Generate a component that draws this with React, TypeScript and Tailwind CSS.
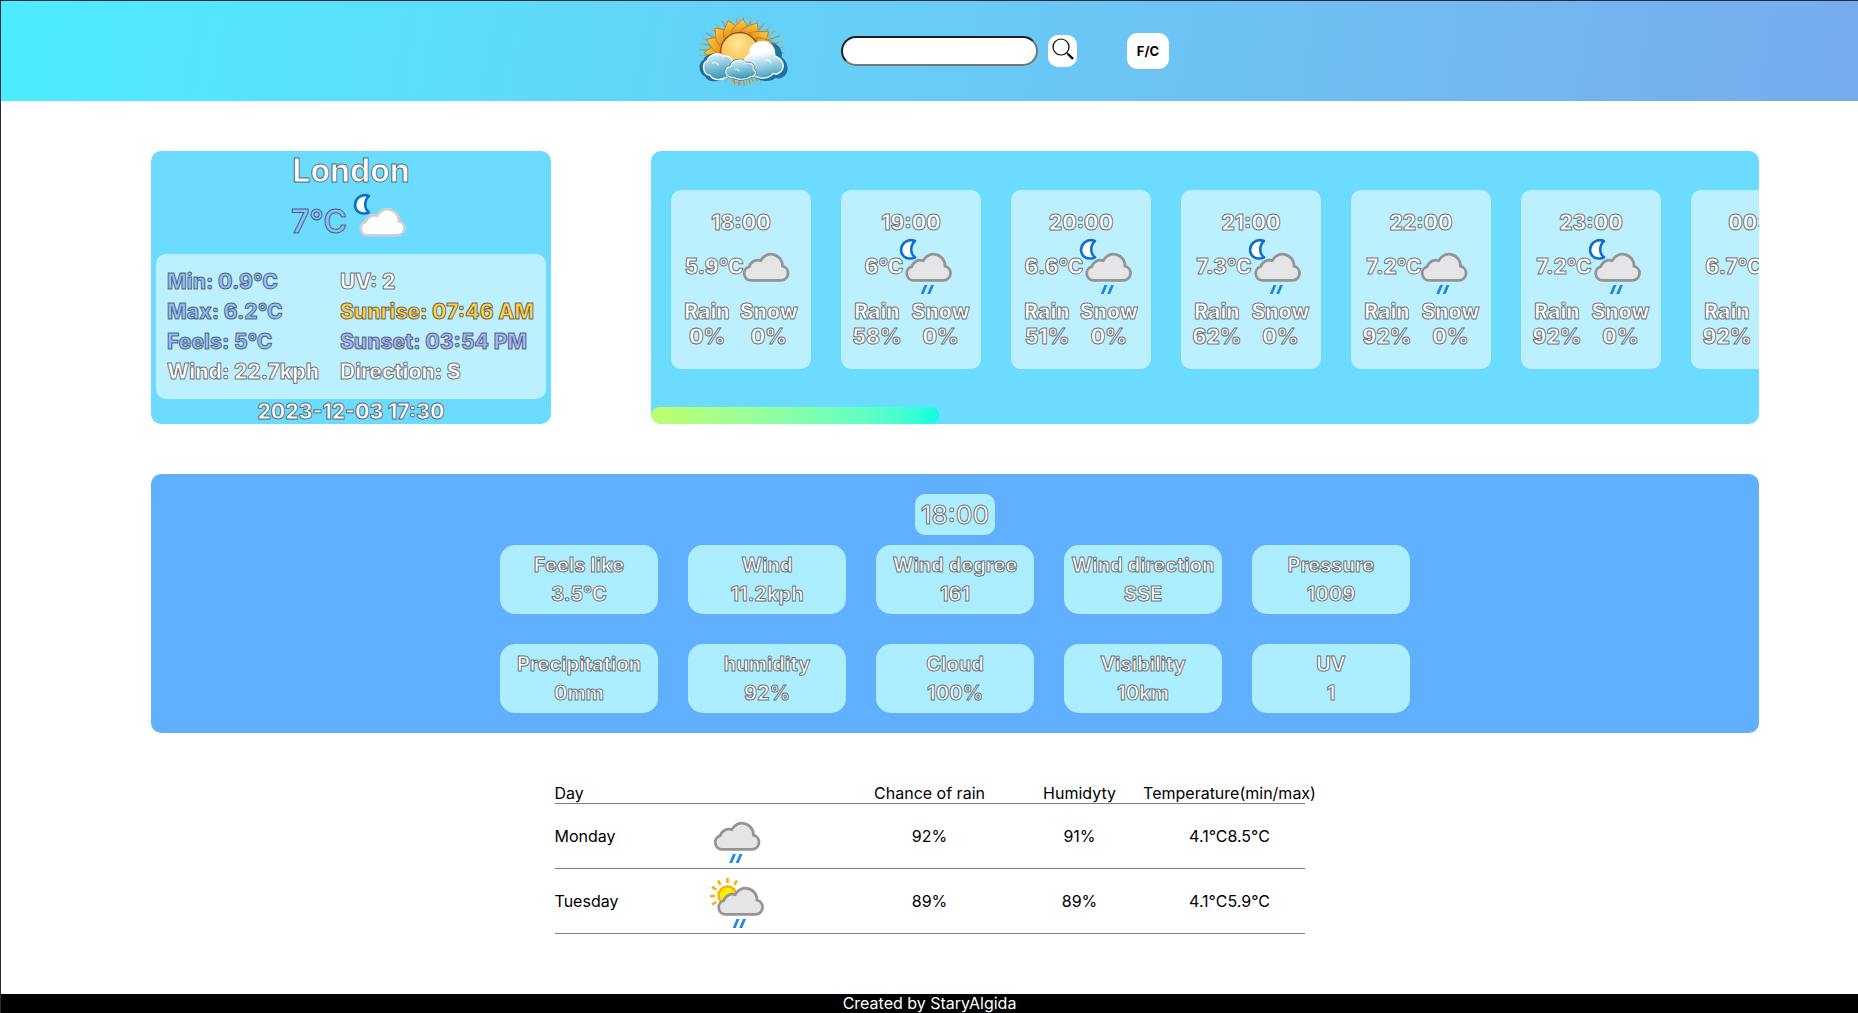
import React from "react";

type Kind = "night" | "cloud" | "nightRain" | "rain" | "dayRain";

const CLOUD =
  "M20.5 45.4H50.500A7.200 7.200 0 0 0 52 31.200A11.500 11.500 0 0 0 30.200 25.600A9 9 0 0 0 18.700 31.700A7 7 0 0 0 20.500 45.400Z";

function WeatherIcon({ kind, className = "" }: { kind: Kind; className?: string }) {
  const shift = kind === "cloud" || kind === "rain" ? "translate(-3.5 0)" : undefined;
  const white = kind === "night";
  return (
    <svg viewBox="0 0 64 64" className={"h-16 w-16 shrink-0 " + className} aria-hidden="true">
      {(kind === "night" || kind === "nightRain") && (
        <path
          d="M22 6C19 4.800 14.500 5 11.500 7.500C7 11.500 7 18 11 21.500C14 24 19 24.200 22 22.300C17 18.500 17 10.500 22 6z"
          fill="#fff"
          stroke="#0a6fd4"
          strokeWidth="2.600"
          strokeLinejoin="round"
        />
      )}
      {kind === "dayRain" && (
        <g>
          <circle cx="22.500" cy="26.500" r="9" fill="#fff000" stroke="#ffb000" strokeWidth="2.400" />
          <path
            d="M22.500 9v5M13 11.500l2.500 4.200M32 11.500l-2.500 4.200M7 17.800l4.200 2.700M5 27h5M7 35.500l4.200-2.500"
            stroke="#ffae00"
            strokeWidth="2.600"
          />
        </g>
      )}
      <g transform={shift}>
        <path d={CLOUD} fill={white ? "#fff" : "#e5e5e7"} stroke={white ? "#cfcfcf" : "#949494"} strokeWidth="2.800" />
        {kind !== "night" && kind !== "cloud" && (
          <path d="M31.500 50h3l-3.800 9h-3zM38 50h3l-3.800 9h-3z" fill="#1e88e5" />
        )}
      </g>
    </svg>
  );
}

function Logo() {
  const rays = Array.from({ length: 72 }, (_, i) => i * 5);
  const petals = [-98, -74, -49, -24, 0, 24, 49, 72];
  return (
    <svg viewBox="0 3 294 240" className="h-20 w-[98px]" role="img" aria-label="Weather">
      <defs>
        <radialGradient id="sun" cx="45%" cy="30%" r="75%">
          <stop offset="0" stopColor="#ffe796" />
          <stop offset="0.600" stopColor="#fbc65a" />
          <stop offset="1" stopColor="#ef9a2c" />
        </radialGradient>
        <linearGradient id="petal" x1="0" y1="0" x2="0" y2="1">
          <stop offset="0" stopColor="#fccf3c" />
          <stop offset="1" stopColor="#e8901f" />
        </linearGradient>
        <linearGradient id="puffBig" x1="0.400" y1="0" x2="0.600" y2="1">
          <stop offset="0.300" stopColor="#ffffff" />
          <stop offset="0.600" stopColor="#a9d8e8" />
          <stop offset="1" stopColor="#3f9dc0" />
        </linearGradient>
        <linearGradient id="puff" x1="0" y1="0" x2="0.200" y2="1">
          <stop offset="0" stopColor="#eef9fb" />
          <stop offset="0.450" stopColor="#93cde0" />
          <stop offset="1" stopColor="#3d97bb" />
        </linearGradient>
      </defs>
      <g transform="translate(155 124) scale(1.080 0.860) translate(-155 -124)">
        {rays.map((a, i) => (
          <path
            key={a}
            d={i % 2 ? "M155 50L152 16" : "M155 50L161 5"}
            stroke={i % 3 === 0 ? "#8f8a6c" : i % 3 === 1 ? "#c99a4a" : "#e0a23c"}
            strokeWidth="2.500"
            transform={`rotate(${a} 155 124)`}
          />
        ))}
      </g>
      <g transform="translate(150 122) scale(1.030 0.910) translate(-150 -122)">
        {petals.map((a) => (
          <path
            key={a}
            d="M124 66C127 46 142 36 158 18C169 36 181 50 176 68z"
            fill="url(#petal)"
            stroke="#b06a1c"
            strokeWidth="2"
            transform={`rotate(${a} 150 122)`}
          />
        ))}
      </g>
      <circle cx="149" cy="125" r="57" fill="url(#sun)" stroke="#8a4a1a" strokeWidth="3.500" />
      <path d="M132 205l2 18M146 208l-1 20M160 208l3 20M176 206l4 16M196 204l6 10" stroke="#e0852a" strokeWidth="4" />
      <path
        d="M232 98C262 96 280 118 275 142C292 154 298 176 288 192C278 208 262 206 256 204C244 216 218 216 196 204z"
        fill="#1f6f9f"
      />
      <path
        d="M100 206C78 220 52 214 46 200C26 194 22 158 40 150C44 138 60 130 76 130L110 206z"
        fill="#1f6f9f"
      />
      <path
        d="M172 192C158 172 158 142 180 132C176 106 204 90 226 96C246 100 256 116 254 138C274 144 284 162 278 176C272 192 256 194 250 190C236 208 206 208 192 196z"
        fill="url(#puffBig)"
        stroke="#fff"
        strokeWidth="4"
      />
      <path
        d="M112 200C92 214 66 210 60 196C38 194 34 160 52 152C56 134 84 124 98 138C116 136 128 144 126 158z"
        fill="url(#puff)"
        stroke="#fff"
        strokeWidth="4"
      />
      <path
        d="M118 200C102 196 104 170 122 170C124 150 156 142 166 160C182 156 194 164 190 178C202 186 196 202 182 200C170 210 140 210 130 202C126 204 122 202 118 200z"
        fill="url(#puff)"
        stroke="#1f6f9f"
        strokeWidth="7"
      />
      <path
        d="M118 200C102 196 104 170 122 170C124 150 156 142 166 160C182 156 194 164 190 178C202 186 196 202 182 200C170 210 140 210 130 202C126 204 122 202 118 200z"
        fill="url(#puff)"
        stroke="#fff"
        strokeWidth="3.500"
      />
      <path
        d="M66 160c8-4 16 0 20 6M200 134c10-4 18 2 20 8M226 150c8-2 14 2 16 8M134 178c8-2 12 2 14 6"
        fill="none"
        stroke="#fff"
        strokeOpacity=".7"
        strokeWidth="4"
      />
    </svg>
  );
}

const hours: { time: string; temp: string; kind: Kind; rain: string }[] = [
  { time: "18:00", temp: "5.9°C", kind: "cloud", rain: "0%" },
  { time: "19:00", temp: "6°C", kind: "nightRain", rain: "58%" },
  { time: "20:00", temp: "6.6°C", kind: "nightRain", rain: "51%" },
  { time: "21:00", temp: "7.3°C", kind: "nightRain", rain: "62%" },
  { time: "22:00", temp: "7.2°C", kind: "rain", rain: "92%" },
  { time: "23:00", temp: "7.2°C", kind: "nightRain", rain: "92%" },
  { time: "00:00", temp: "6.7°C", kind: "rain", rain: "92%" },
];

const details = [
  ["Feels like", "3.5°C"],
  ["Wind", "11.2kph"],
  ["Wind degree", "161"],
  ["Wind direction", "SSE"],
  ["Pressure", "1009"],
  ["Precipitation", "0mm"],
  ["humidity", "92%"],
  ["Cloud", "100%"],
  ["Visibility", "10km"],
  ["UV", "1"],
];

const days: { day: string; kind: Kind; rain: string; humidity: string; min: string; max: string }[] = [
  { day: "Monday", kind: "rain", rain: "92%", humidity: "91%", min: "4.1°C", max: "8.5°C" },
  { day: "Tuesday", kind: "dayRain", rain: "89%", humidity: "89%", min: "4.1°C", max: "5.9°C" },
];

export default function App() {
  return (
    <div className="flex min-h-screen flex-col border-t border-l border-[#2b2a3a] bg-white font-['Inter',sans-serif] text-base text-black">
      <header className="flex h-[100px] items-center justify-center bg-linear-100 from-[#4cecff] to-[#76abed]">
        <Logo />
        <input
          type="text"
          aria-label="City"
          className="ml-[53px] h-[30px] w-[197px] rounded-full border-2 border-t-[#1f1f1f] border-r-[#767676] border-b-[#767676] border-l-[#1f1f1f] bg-white px-3"
        />
        <button aria-label="Search" className="ml-2.5 flex h-8 w-[29px] items-start justify-center rounded-[10px] bg-white pt-0.5">
          <svg viewBox="0 0 24 24" className="h-6 w-6" fill="none" stroke="#000">
            <circle cx="10" cy="10" r="8" strokeWidth="1.200" />
            <path d="M15.800 15.800l2 2" strokeWidth="1.200" />
            <path d="M17 17l5 5" strokeWidth="2.400" />
          </svg>
        </button>
        <button className="ml-[50px] h-9 w-[42px] rounded-[10px] bg-white pt-0.5 text-[13px] font-bold">F/C</button>
      </header>

      <main className="flex flex-col">
        <div className="mt-[50px] mr-[99px] ml-[150px] flex gap-[100px]">
          <section className="w-[400px] shrink-0 rounded-[10px] bg-[#6bdbff] text-center text-[21px] font-extrabold text-white [-webkit-text-stroke:1px_rgba(50,35,35,0.66)]">
            <h2 className="text-[32px] leading-10 font-bold">London</h2>
            <div className="-mt-px flex h-16 items-center justify-center">
              <span className="text-[32px] font-semibold text-[#8abfff]">7°C</span>
              <WeatherIcon kind="night" />
            </div>
            <div className="mx-[5px] grid grid-cols-[auto_auto] justify-start gap-x-[21px] rounded-[10px] bg-[#bdf0ff] px-[11px] pt-[13px] pb-3 text-left leading-[30px] whitespace-nowrap">
              <span className="text-[#8abfff]">Min: 0.9°C</span>
              <span>UV: 2</span>
              <span className="text-[#8abfff]">Max: 6.2°C</span>
              <span className="text-[#ffd04a]">Sunrise: 07:46 AM</span>
              <span className="text-[#8abfff]">Feels: 5°C</span>
              <span className="text-[#9db4ff]">Sunset: 03:54 PM</span>
              <span>Wind: 22.7kph</span>
              <span>Direction: S</span>
            </div>
            <p className="leading-[25px]">2023-12-03 17:30</p>
          </section>

          <section className="flex min-w-0 flex-1 flex-col overflow-hidden rounded-[10px] bg-[#6bdbff]">
            <div className="flex flex-1 items-center gap-[30px] pl-5">
              {hours.map((h) => (
                <article
                  key={h.time}
                  className="flex w-[140px] shrink-0 flex-col items-center rounded-[10px] bg-[#bdf0ff] py-5 text-center text-[21px] leading-[25px] font-extrabold text-white [-webkit-text-stroke:1px_rgba(50,35,35,0.66)]"
                >
                  <span>{h.time}</span>
                  <div className="flex items-center">
                    <span>{h.temp}</span>
                    <WeatherIcon kind={h.kind} className="-ml-2.5" />
                  </div>
                  <div className="flex gap-2.5">
                    <span>
                      Rain
                      <br />
                      {h.rain}
                    </span>
                    <span>
                      Snow
                      <br />
                      0%
                    </span>
                  </div>
                </article>
              ))}
            </div>
            <div className="h-[17px] w-[26%] rounded-[10px] bg-linear-to-r from-[#bdff6a] to-[#00ffdd]" />
          </section>
        </div>

        <section className="mt-[50px] mr-[99px] ml-[150px] flex flex-col items-center gap-2.5 rounded-[10px] bg-[#60b0ff] py-5 text-center text-white [-webkit-text-stroke:1px_rgba(50,35,35,0.66)]">
          <h3 className="rounded-[10px] bg-[#aceeff] px-1.5 text-[26px] leading-[41px] font-medium">18:00</h3>
          <dl className="grid grid-cols-[repeat(5,158px)] gap-[30px] text-xl leading-[29px] font-bold">
            {details.map(([label, value]) => (
              <div key={label} className="rounded-[15px] bg-[#aceeff] pt-1.5 pb-[5px] whitespace-nowrap">
                <dt>{label}</dt>
                <dd>{value}</dd>
              </div>
            ))}
          </dl>
        </section>

        <table className="mx-auto mt-[50px] w-[750px] table-fixed border-collapse text-center">
          <thead>
            <tr className="border-b border-[#808080] leading-5 *:p-0 *:font-normal">
              <th className="text-left">Day</th>
              <th aria-label="Forecast" />
              <th>Chance of rain</th>
              <th>Humidyty</th>
              <th>
                <span className="flex justify-center whitespace-nowrap">Temperature(min/max)</span>
              </th>
            </tr>
          </thead>
          <tbody>
            {days.map((d) => (
              <tr key={d.day} className="border-b border-[#808080] *:p-0">
                <td className="text-left">{d.day}</td>
                <td>
                  <WeatherIcon kind={d.kind} />
                </td>
                <td>{d.rain}</td>
                <td>{d.humidity}</td>
                <td>
                  {d.min}
                  {d.max}
                </td>
              </tr>
            ))}
          </tbody>
        </table>
      </main>

      <footer className="mt-auto bg-black text-center leading-[19px] text-white">Created by StaryAlgida</footer>
    </div>
  );
}
